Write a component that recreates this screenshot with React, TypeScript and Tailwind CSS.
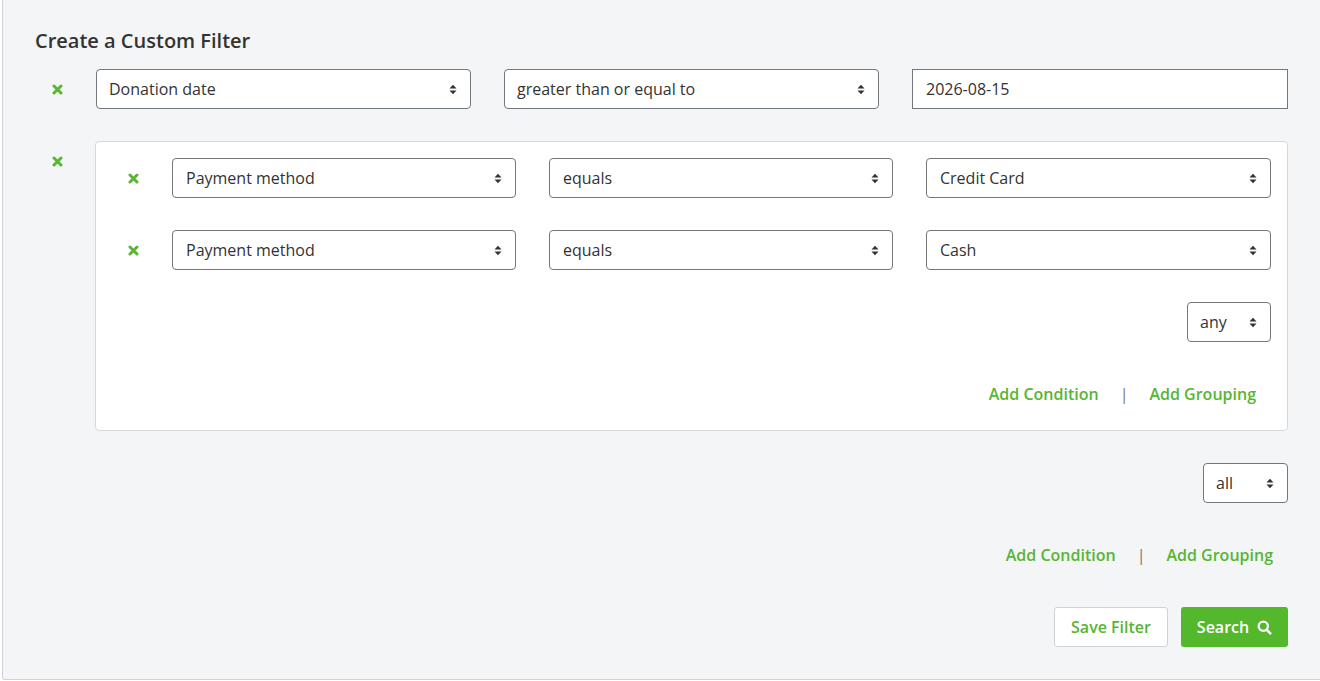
import React from 'react';

const GREEN = 'text-[#58b533]';

const RemoveIcon: React.FC = () => (
  <svg width="11" height="11" viewBox="0 0 11 11" className="block">
    <path d="M2 2 L9 9 M9 2 L2 9" stroke="#5ab730" strokeWidth="3" strokeLinecap="round" />
  </svg>
);

const SortCaret: React.FC = () => (
  <svg width="8" height="11" viewBox="0 0 8 11" className="block">
    <path d="M0.5 4.5 L4 0.8 L7.5 4.5 Z M0.5 6.5 L4 10.2 L7.5 6.5 Z" fill="#333" />
  </svg>
);

const SearchIcon: React.FC = () => (
  <svg width="15" height="15" viewBox="0 0 15 15" className="block">
    <circle cx="6.3" cy="6.3" r="4.6" fill="none" stroke="#fff" strokeWidth="2.3" />
    <path d="M9.8 9.8 L13.3 13.3" stroke="#fff" strokeWidth="2.6" strokeLinecap="round" />
  </svg>
);

interface SelectProps {
  value: string;
  className?: string;
}

const FakeSelect: React.FC<SelectProps> = ({ value, className = '' }) => (
  <div
    className={`h-10 flex items-center justify-between bg-white border border-[#72777c] rounded-[4px] pl-3 pr-[13px] text-base text-[#333] ${className}`}
  >
    <span>{value}</span>
    <SortCaret />
  </div>
);

const Links: React.FC = () => (
  <div className="h-10 flex items-center justify-end pr-[15px] text-base font-semibold">
    <span className={GREEN}>Add Condition</span>
    <span className="mx-[21px] text-[#777] font-normal">|</span>
    <span className={GREEN}>Add Grouping</span>
  </div>
);

const App: React.FC = () => {
  return (
    <div
      className="w-[1320px] h-[681px] bg-white overflow-hidden"
      style={{ fontFamily: '"Open Sans", "Liberation Sans", sans-serif' }}
    >
      <div className="ml-[2px] w-[1320px] h-[680px] bg-[#f4f5f7] border-l border-b border-r border-[#cfd2d6] rounded-bl-[3px] pl-[32px] pr-[32px]">
        <h2 className="pt-[27px] text-[20px] leading-7 font-semibold text-[#333]">Create a Custom Filter</h2>

        <div className="mt-[14px] flex flex-col gap-8 w-[1253px]">
          {/* top level condition */}
          <div className="flex items-center">
            <div className="w-[61px] pl-[17px]">
              <RemoveIcon />
            </div>
            <div className="flex-1 flex gap-[33px]">
              <FakeSelect value="Donation date" className="w-[375px]" />
              <FakeSelect value="greater than or equal to" className="w-[375px]" />
              <div className="w-[376px] h-10 flex items-center bg-white border border-[#72777c] pl-[13px] text-base text-[#333]">
                2026-08-15
              </div>
            </div>
          </div>

          {/* nested grouping */}
          <div className="flex items-start">
            <div className="w-[61px] pl-[17px] pt-[15px]">
              <RemoveIcon />
            </div>
            <div className="flex-1 bg-white border border-[#d6d9dc] rounded-[4px] pt-4 pb-4 pr-4 flex flex-col gap-8">
              {['Credit Card', 'Cash'].map((v) => (
                <div key={v} className="flex items-center">
                  <div className="w-[76px] pl-[32px]">
                    <RemoveIcon />
                  </div>
                  <div className="flex-1 flex gap-[33px]">
                    <FakeSelect value="Payment method" className="w-[344px] pl-[13px]" />
                    <FakeSelect value="equals" className="w-[344px] pl-[13px]" />
                    <FakeSelect value={v} className="w-[345px] pl-[13px]" />
                  </div>
                </div>
              ))}
              <div className="flex justify-end">
                <FakeSelect value="any" className="w-[84px]" />
              </div>
              <Links />
            </div>
          </div>

          <div className="flex justify-end">
            <FakeSelect value="all" className="w-[85px]" />
          </div>

          <Links />

          <div className="flex justify-end gap-[13px]">
            <button className="h-10 w-[114px] bg-white border border-[#cfd2d6] rounded-[3px] text-base font-semibold text-[#58b533]">
              Save Filter
            </button>
            <button className="h-10 w-[107px] bg-[#54b82c] rounded-[3px] text-base font-semibold text-white flex items-center justify-center gap-2">
              Search
              <SearchIcon />
            </button>
          </div>
        </div>
      </div>
    </div>
  );
};

export default App;
